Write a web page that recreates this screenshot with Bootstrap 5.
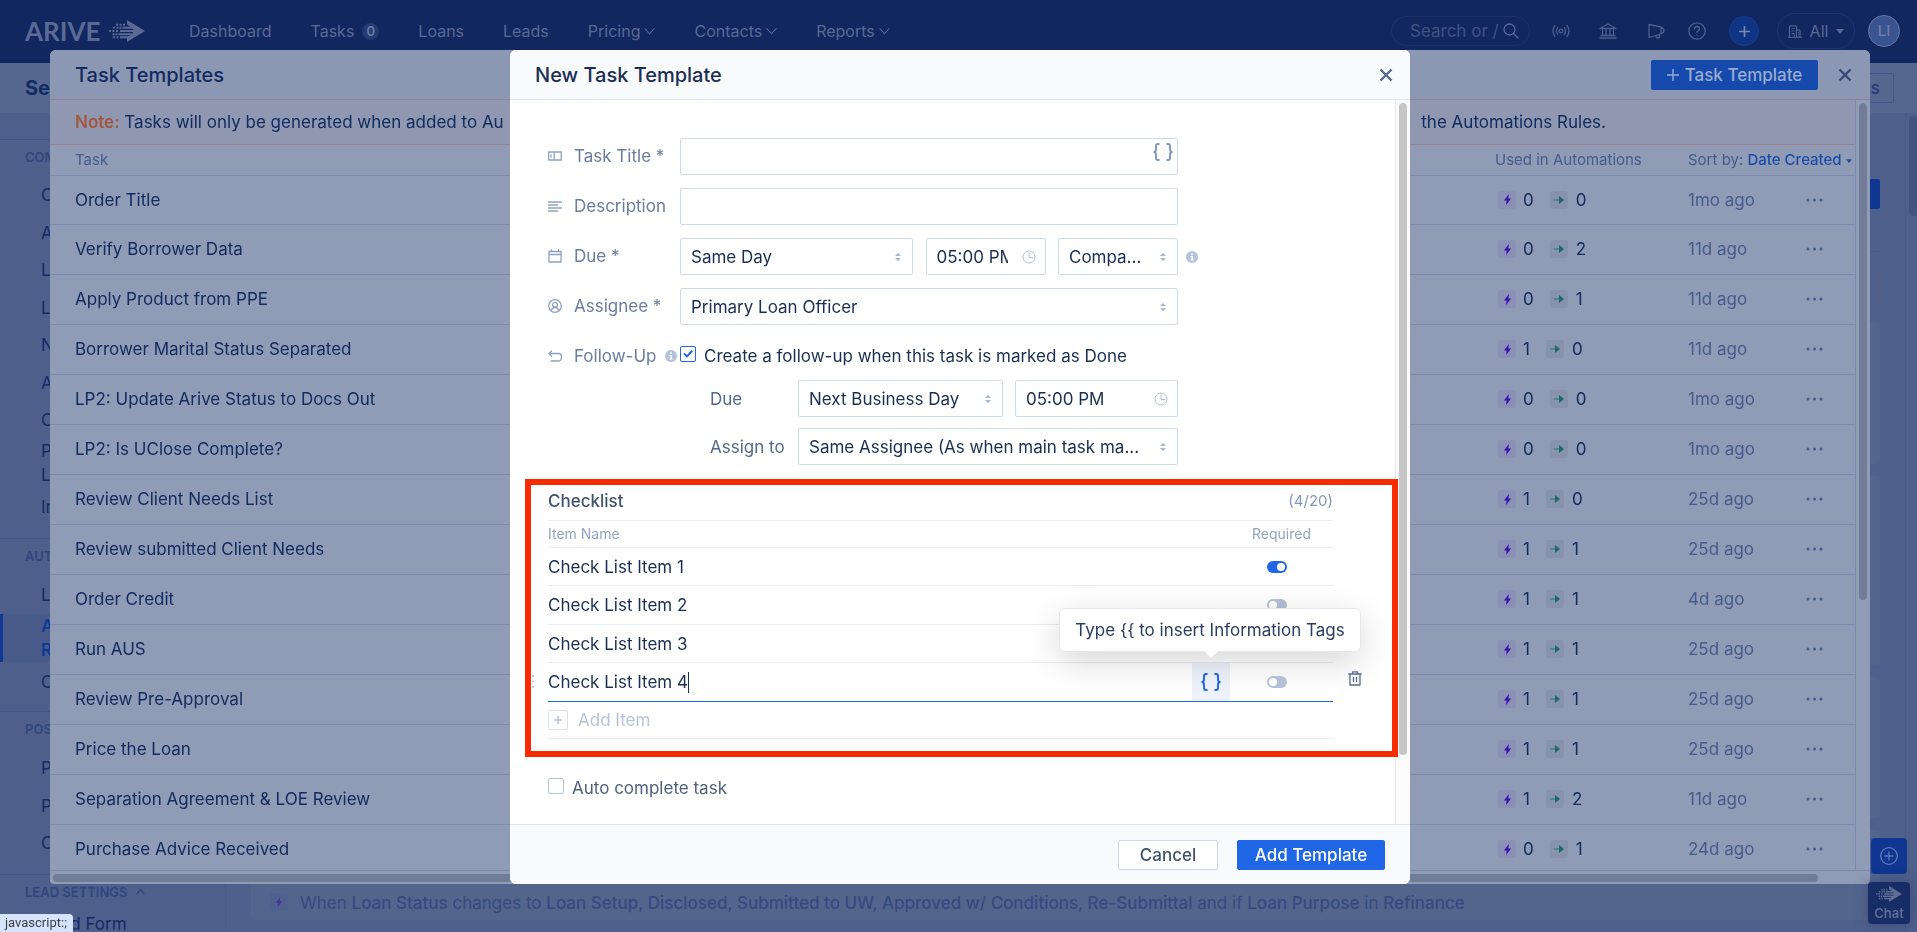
<!DOCTYPE html>
<html lang="en">
<head>
<meta charset="utf-8">
<meta name="viewport" content="width=device-width, initial-scale=1">
<title>ARIVE - Task Templates</title>
<link href="https://cdn.jsdelivr.net/npm/bootstrap@5.3.0/dist/css/bootstrap.min.css" rel="stylesheet">
<style>
:root{--fs:17px;--fs-sm:15px;--fs-xs:14px;--fs-lg:20px}
body{font-family:Inter,"Liberation Sans",sans-serif;font-size:var(--fs);line-height:24px;color:#122b60;background:#4f608c;height:100vh;overflow:hidden;display:flex;flex-direction:column}
button,input,select{font-family:inherit}
a{color:inherit;text-decoration:none}
svg{display:block;flex:none}
.ico{fill:none;stroke:currentColor;stroke-width:1.3;stroke-linecap:round;stroke-linejoin:round}

/* top bar */
.topbar{height:63px;background:#12265f;color:#5a6a94;font-size:16px;padding:0 17px 1px 25px;flex:none}
.brand{font-family:Lato,sans-serif;font-size:26px;font-weight:700;line-height:1;width:120px}
.mainnav{gap:39px;margin-left:44px}
.count{background:#243a72;border-radius:12px;font-size:13px;font-weight:600;width:17px;height:17px;line-height:17px;text-align:center;margin-left:8px;color:#6a7aa2}
.search{width:139px;height:30px;border:1px solid #1c3069;border-radius:15px;padding:0 11px 0 18px}
.search input{background:none;border:0;color:#5a6a94;width:93px;padding:0;font-size:17px;outline:0}
.search input::placeholder{color:#42527f;opacity:1}
.ticon{border:0;background:none;padding:0;color:#4c5d8a}
.addbtn{width:30px;height:30px;border-radius:50%;background:#0f3484;border:1px solid #143f94;color:#7387b4}
.allbtn{width:78px;height:36px;border-radius:18px;border:1px solid #1f3370;background:none;color:#5a6a94;padding:0}
.avatar{width:32px;height:32px;border-radius:50%;background:#3a5391;border:1px solid #6476a3;color:#6b7dab;font-size:15px;line-height:30px;text-align:center;font-weight:500}

/* page behind the dialogs */
.pagebar{height:50px;background:#55678f;flex:none;padding:0 23px 0 25px}
.pagebar h1{font-size:20px;font-weight:700;margin:0;color:#122c68}
.tagbtn{height:30px;border:1px solid #43558a;border-radius:2px;background:none;color:#23397a;font-size:var(--fs);font-weight:500;padding:0 13px}
.side{width:226px;border-right:1px solid #4a5b88;background:#4e5f8b;flex:none;color:#122c68;white-space:nowrap}
.side h2{font-size:13px;font-weight:600;color:#31467f;margin:0;line-height:16px;padding-left:25px}
.side section{border-top:1px solid #43558a;padding-top:9px}
.side a{display:block;padding:6px 0 7px 41px;width:200px}
.side a:nth-of-type(even){padding-top:7px}
.side a.active{border-left:3px solid #0f3a94;padding:0 0 0 38px;background:#475a8a;color:#0f3a94;font-weight:600}
.main{padding:0 25px}
.ghost{background:#53658d;border-radius:4px;margin-bottom:12px}
.prim{background:#0f3690;width:90px;height:30px;border:0;border-radius:2px}
.field-back{height:39px;border:1px solid #5a5d80;border-radius:3px;margin:19px 0 12px}
.rule{color:#364a7f;font-size:17px;padding:6px 19px;white-space:nowrap;gap:12px}
.rule b{font-weight:500}
.vthumb{background:#43557f;border-radius:4px;width:8px}
.gutter{width:15px;flex:none;padding:3px 0 0 3px}

/* list dialog */
.dlg{top:50px;bottom:48px;border-radius:6px 6px 4px 4px;overflow:hidden;display:flex;flex-direction:column}
.dlg-list{left:50px;right:47px;background:#909bb6}
.dlg-head{height:50px;flex:none;padding:0 25px;border-bottom:1px solid}
.dlg-head h2{font-size:var(--fs-lg);font-weight:500;margin:0;line-height:26px}
.dlg-list .dlg-head{border-color:#957f92;background:#8c97b4;padding-right:18px}
.note{height:45px;border-bottom:1px solid #997f8f;background:#9098b1;padding:0 249px 0 25px}
.note b{color:#a45640;font-weight:600}
.newbtn{background:#1549ac;color:#9aabd0;border:0;border-radius:2px;width:167px;height:30px;padding:0;font-weight:500;font-size:var(--fs)}
.tasks{width:100%;table-layout:fixed;border-collapse:collapse}
.tasks td,.tasks th{padding:0;border-bottom:1px solid #7d8aad;height:50px}
.tasks th{height:30px;font-weight:400;font-size:var(--fs-sm);color:#465b8d}
.tasks tbody tr:first-child td{height:49px}
.tasks td:first-child,.tasks th:first-child{padding-left:25px}
.tasks .ago{color:#465b8d}
.chip{width:18px;height:18px;border-radius:3px;background:#8b91b6;display:inline-flex;align-items:center;justify-content:center;flex:none}
.chip.go{background:#8793ad}
.dots{border:0;background:none;padding:0;color:#465b8d;display:block}
.hbar{height:14px;flex:none;padding:3px 52px 0 3px;border-top:1px solid #7d8aad}
.hbar div{height:8px;border-radius:4px;background:#717d97}

/* form dialog */
.dlg-form{left:0;right:-3px;margin:auto;width:900px;background:#fff;color:#1a2e52;border-radius:6px}
.dlg-form .dlg-head{background:#f9fafc;border-color:#dfe5ec;padding-right:17px}
.xbtn{border:0;background:none;padding:0;width:14px;color:#566a90}
.form-area{padding:38px 0 0 38px;flex:1}
.frow{display:grid;grid-template-columns:132px 498px 20px;margin-bottom:13px}
.lab{color:#6b7c9e;gap:12px;height:36px;white-space:nowrap}
.lab svg{color:#8fa1c2}
.box,.sel{height:37px;border:1px solid #cfd9ea;border-radius:2px;background:#fff;color:#1a2e52;font-size:var(--fs);padding:0 10px;width:100%;line-height:24px}
.sel{appearance:none;padding-right:24px;background:#fff url("data:image/svg+xml,%3Csvg xmlns='http://www.w3.org/2000/svg' width='8' height='10' viewBox='0 0 8 10'%3E%3Cpath d='M1 4 4 .8 7 4zM1 6l3 3.2L7 6z' fill='%23a9b8d2'/%3E%3C/svg%3E") no-repeat right 10px center}
.timebox{padding:0 9px 0 10px}
.timebox input{border:0;padding:0;min-width:0;flex:1;color:#1a2e52;background:none;font-size:var(--fs);outline:0}
.timebox svg{color:#b0bed8;margin-left:14px}
.tick{appearance:none;width:16px;height:16px;border:1px solid #b4c2dc;border-radius:2px;margin:0 0 4px;flex:none}
.tick:checked{border-color:#1f67e6;background:url("data:image/svg+xml,%3Csvg xmlns='http://www.w3.org/2000/svg' width='14' height='14' viewBox='0 0 14 14'%3E%3Cpath d='M3 6.6 6 9.4 11.2 3.8' fill='none' stroke='%231f67e6' stroke-width='2'/%3E%3C/svg%3E") center}
.info{width:12px;height:12px}
.sublab{color:#56688b;width:88px;flex:none}
.checklist{border:6px solid #f92b02;margin:14px -3px 0 -23px;position:relative;z-index:2;padding:0 59px 12px 17px}
.checklist .line{border-bottom:1px solid #e9edf3}
.cl-row{height:38px}
.cl-row:nth-child(even){height:39px}
.cl-row input[type=text]{border:0;padding:0;font-size:var(--fs);color:#1a2e52;flex:1;background:none;outline:0}
.cl-row.on{border-bottom:1px solid #1f67e6!important}
.small-head{font-size:var(--fs-xs);color:#93a3c0;height:27px;padding-right:22px}
.tog{appearance:none;width:20px;height:12px;border-radius:6px;background:#b4c0d5;margin:0 46px 0 0;flex:none;position:relative}
.tog::after{content:"";position:absolute;width:8px;height:8px;border-radius:50%;background:#fff;left:2px;top:2px}
.tog:checked{background:#1f67e6}
.tog:checked::after{left:10px}
.brace{width:38px;height:38px;border:0;padding:0;background:#edf2fc;color:#1f67e6;margin-right:37px;display:flex;align-items:center;justify-content:center}
.tip{position:absolute;bottom:49px;right:-131px;width:302px;height:44px;background:#fff;border:1px solid #e6e8ec;border-radius:6px;color:#2a3d60;font-size:var(--fs);line-height:42px;text-align:center;white-space:nowrap;box-shadow:0 10px 34px rgba(0,0,0,.16)}
.tip::after{content:"";position:absolute;left:143px;bottom:-7px;border:8px solid transparent;border-top-color:#fff;border-bottom:0}
.caret{width:1px;height:21px;background:#1a2e52}
.del{position:absolute;right:-29px;top:8px;border:0;background:none;padding:0;color:#566a90}
.grip{position:absolute;left:-18px;top:12px;color:#c3ccda}
.additem{border:0;background:none;padding:0;color:#b7c4dc;font-size:var(--fs);height:37px;width:100%;text-align:left}
.plusbox{width:20px;height:20px;border:1px solid #d9e0ec;border-radius:2px;display:flex;align-items:center;justify-content:center}
.fgutter{border-left:1px solid #e6e8ec;background:#fbfbfb}
.dlg-foot{height:60px;flex:none;background:#f9fafc;border-top:1px solid #dfe5ec;padding:0 25px;gap:19px}
.fbtn{height:30px;border-radius:2px;border:1px solid #cfd9ea;background:#fff;color:#42536f;font-size:var(--fs);font-weight:500;width:100px;padding:0}
.fbtn.go{background:#1f67e6;border-color:#1f67e6;color:#fff;width:148px}

/* floating pieces */
.float-tools{right:7px;bottom:8px;width:42px}
.fplus{width:36px;height:36px;border:0;border-radius:4px;background:#0f3690;color:#5f79b4;margin-bottom:8px}
.chat{width:42px;height:42px;border:0;border-radius:4px;background:#182c66;color:#5e6d96;font-size:13px;font-weight:600;line-height:14px;padding:0;box-shadow:0 0 14px rgba(30,45,100,.4)}
.status{left:0;bottom:0;height:18px;width:73px;background:#d5e3fc;color:#3c4043;font-size:13px;line-height:18px;padding-left:5px;border-top-right-radius:4px;font-family:Roboto,sans-serif}
</style>
</head>
<body>
<svg width="0" height="0" class="position-absolute">
  <symbol id="arrow-logo" viewBox="0 0 36 22"><path d="M18 0 36 11 18 22V17.500l3.500-2.300H9.500v-2H24V12H11v-2h13V8.800H13.500v-2h8L18 4.500z" fill="currentColor"/><g fill="currentColor"><path d="M7 3.700h2v2H7zM10.500 3.700h2v2h-2zM14 3.700h2v2h-2zM4 6.800h2v2H4zM7.500 6.800h2v2h-2zM10.500 6.800h2v2h-2zM0 10h2v2H0zM3.500 10h2v2h-2zM7 10h2v2H7zM3.500 13.200h2v2h-2zM6.500 13.200h2v2h-2zM4 16.300h2v2H4zM7.500 16.300h2v2h-2zM11 16.300h9v2h-9z"/></g></symbol>
  <symbol id="chev" viewBox="0 0 10 7"><path d="M0.500 1 5 6 9.500 1" fill="none" stroke="currentColor" stroke-width="1"/></symbol>
  <symbol id="bolt" viewBox="0 0 10 12"><path d="M6.500 0 1 7h3L3.500 12 9 5H6z" fill="#3a17a8"/></symbol>
  <symbol id="arr" viewBox="0 0 12 10"><path d="M1 5h6" stroke="#3f8787" stroke-width="1.600"/><path d="M6 1l5 4-5 4z" fill="#1b6a66"/></symbol>
  <symbol id="x" viewBox="0 0 14 14"><path d="M1.500 1.500 12.500 12.500M12.500 1.500 1.500 12.500" stroke="currentColor" stroke-width="2.400" fill="none"/></symbol>
  <symbol id="clock" viewBox="0 0 14 14"><circle cx="7" cy="7" r="6" fill="none" stroke="currentColor"/><path d="M7 2.500V7.500h4" fill="none" stroke="currentColor"/></symbol>
  <symbol id="braces" viewBox="0 0 22 18"><path d="M7.500 1H6Q4 1 4 3v3.500Q4 9 1.500 9 4 9 4 11.500V15q0 2 2 2h1.500M14.500 1H16q2 0 2 2v3.500Q18 9 20.500 9 18 9 18 11.500V15q0 2-2 2h-1.500" fill="none" stroke="currentColor" stroke-width="1.900"/></symbol>
  <symbol id="info" viewBox="0 0 12 12"><circle cx="6" cy="6" r="6" fill="#b4c2dc"/><path d="M5.200 2.200h1.700v1.600H5.200zM4.500 5h2.400v3.500h.8v1H4.500v-1h.9V6h-.9z" fill="#fff"/></symbol>
</svg>

<header class="topbar d-flex align-items-center">
  <a href="#" class="brand d-flex align-items-center justify-content-between">ARIVE <svg width="36" height="22"><use href="#arrow-logo"/></svg></a>
  <nav class="mainnav d-flex align-items-center">
    <a href="#">Dashboard</a>
    <a href="#" class="d-flex align-items-center">Tasks<span class="count">0</span></a>
    <a href="#">Loans</a>
    <a href="#">Leads</a>
    <a href="#" class="d-flex align-items-center gap-1">Pricing <svg width="11" height="8"><use href="#chev"/></svg></a>
    <a href="#" class="d-flex align-items-center gap-1">Contacts <svg width="11" height="8"><use href="#chev"/></svg></a>
    <a href="#" class="d-flex align-items-center gap-1">Reports <svg width="11" height="8"><use href="#chev"/></svg></a>
  </nav>
  <div class="ms-auto d-flex align-items-center">
    <label class="search d-flex align-items-center justify-content-between"><input type="text" placeholder="Search or /" aria-label="Search">
      <svg class="ico" width="16" height="16" viewBox="0 0 16 16" stroke="#5a6a94"><circle cx="6.500" cy="6.500" r="5.500"/><path d="M10.500 10.500 15 15"/></svg></label>
    <button class="ticon" style="margin-left:22px" aria-label="Live"><svg class="ico" width="18" height="14" viewBox="0 0 18 14"><circle cx="9" cy="7" r="1.800"/><path d="M5.700 3.500q-2.400 3.500 0 7M12.300 3.500q2.400 3.500 0 7M3 1.500q-4 5.500 0 11M15 1.500q4 5.500 0 11"/></svg></button>
    <button class="ticon" style="margin-left:29px" aria-label="Bank"><svg class="ico" width="18" height="16" viewBox="0 0 18 16"><path d="M1 5.500 9 1l8 4.500zM3.500 6v6.500M7 6v6.500M11 6v6.500M14.500 6v6.500M2 12.500h14M1 15h16"/></svg></button>
    <button class="ticon" style="margin-left:31px" aria-label="Announcements"><svg class="ico" width="17" height="16" viewBox="0 0 17 16"><path d="M1 1.500 13 4v7L1 14.500zM13 4.500q3 .5 3 3t-3 3M8 12.500v1.500q2 2 3.500 0v-2.500"/></svg></button>
    <button class="ticon" style="margin-left:23px" aria-label="Help"><svg class="ico" width="18" height="18" viewBox="0 0 18 18"><circle cx="9" cy="9" r="8.200"/><path d="M6.500 7q0-2.500 2.500-2.500T11.500 7Q11.500 8.500 9 9.500v1M9 13v.3"/></svg></button>
    <button class="addbtn d-flex align-items-center justify-content-center p-0" style="margin-left:23px" aria-label="Add"><svg width="11" height="11" viewBox="0 0 11 11"><path d="M5.500 0v11M0 5.500h11" stroke="currentColor" stroke-width="1.700"/></svg></button>
    <button class="allbtn d-flex align-items-center justify-content-center gap-2" style="margin-left:18px"><svg class="ico" width="14" height="13" viewBox="0 0 14 13"><path d="M1.500 12V1h7v11M8.500 5h3.500v7M0.500 12.300h13M4 3.500h.3M6 3.500h.3M4 6h.3M6 6h.3M4 8.500h2.300V12M10.500 7.500v.3M10.500 9.800v.3" stroke-width="1"/></svg>All<svg width="8" height="5" viewBox="0 0 8 5"><path d="M0 0h8L4 5z" fill="currentColor"/></svg></button>
    <div class="avatar" style="margin-left:13px">LI</div>
  </div>
</header>

<div class="pagebar d-flex align-items-center justify-content-between"><h1>Se</h1><button class="tagbtn">Tags</button></div>

<div class="d-flex flex-grow-1 overflow-hidden">
  <aside class="side">
    <div style="height:26px"></div>
    <section style="height:399px"><h2 style="margin-bottom:12px">COM</h2>
      <a href="#">C</a><a href="#">A</a><a href="#">L</a><a href="#">L</a><a href="#">N</a><a href="#">A</a><a href="#">C</a><a href="#" class="pt-0 pb-1">P<br>L</a><a href="#" class="pt-1">Ir</a>
    </section>
    <section style="height:173px"><h2 class="mb-2">AUT</h2>
      <a href="#" style="padding-top:11px">L</a><a href="#" class="active">A<br>R</a><a href="#" class="pt-2">C</a>
    </section>
    <section style="height:163px"><h2 style="margin-bottom:13px">POS</h2>
      <a href="#">P</a><a href="#">P</a><a href="#">C</a>
    </section>
    <section><h2 class="d-flex align-items-center gap-2">LEAD SETTINGS <svg width="9" height="6" viewBox="0 0 10 7"><path d="M.5 6 5 1l4.500 5" fill="none" stroke="currentColor" stroke-width="1.500"/></svg></h2>
      <a href="#" class="pt-2 mt-1">Lead Form</a>
    </section>
  </aside>
  <main class="main flex-grow-1 overflow-hidden">
    <div class="d-flex justify-content-end align-items-center border-bottom" style="height:139px;padding-top:24px;border-color:#4a5b88!important"><button class="prim" aria-label="New rule"></button></div>
    <div class="field-back"></div>
    <div class="ghost" style="height:142px"></div>
    <div class="ghost" style="height:189px"></div>
    <div class="ghost" style="height:141px"></div>
    <div class="ghost rule d-flex align-items-end" style="height:90px;padding-bottom:5px"><span class="chip mb-1" style="background:#50608f"><svg width="8" height="10" opacity=".6"><use href="#bolt"/></svg></span><span>When <b>Loan Status</b> changes to <b>Loan Setup, Disclosed, Submitted to UW, Approved w/ Conditions, Re-Submittal</b> and if <b>Loan Purpose</b> in <b>Refinance</b></span></div>
  </main>
  <div class="gutter" style="width:12px;border-left:1px solid #4a5b88"><div class="vthumb" style="height:100px"></div></div>
</div>

<section class="dlg dlg-list position-fixed" role="dialog" aria-label="Task Templates">
  <div class="dlg-head d-flex align-items-center">
    <h2 class="me-auto">Task Templates</h2>
    <button class="newbtn d-flex align-items-center justify-content-center gap-1"><svg width="14" height="12" viewBox="0 0 14 12"><path d="M6 0v12M0 6h12" stroke="currentColor" stroke-width="1.400"/></svg>Task Template</button>
    <button class="xbtn" style="margin-left:20px;color:#354a7c" aria-label="Close"><svg width="14" height="14"><use href="#x"/></svg></button>
  </div>
  <div class="d-flex flex-grow-1 overflow-hidden">
    <div class="flex-grow-1 overflow-hidden" style="border-right:1px solid #7d8aad">
      <div class="note d-flex align-items-center justify-content-between"><span><b>Note:</b> Tasks will only be generated when added to Au</span><span>the Automations Rules.</span></div>
      <table class="tasks">
        <colgroup><col><col style="width:359px"><col style="width:118px"><col style="width:49px"></colgroup>
        <thead><tr><th>Task</th><th style="padding-left:166px">Used in Automations</th><th colspan="2" class="text-nowrap">Sort by: <a href="#" style="color:#1a4cac;font-weight:500">Date Created <svg class="d-inline-block align-middle" width="6" height="4" viewBox="0 0 8 5"><path d="M0 0h8L4 5z" fill="currentColor"/></svg></a></th></tr></thead>
        <tbody id="rows"></tbody>
      </table>
    </div>
    <div class="gutter" style="width:14px"><div class="vthumb" style="height:497px;background:#717d97"></div></div>
  </div>
  <div class="hbar"><div></div></div>
</section>

<section class="dlg dlg-form position-fixed" role="dialog" aria-label="New Task Template">
  <div class="dlg-head d-flex align-items-center justify-content-between"><h2>New Task Template</h2><button class="xbtn" aria-label="Close"><svg width="14" height="14"><use href="#x"/></svg></button></div>
  <div class="d-flex flex-grow-1">
    <form class="form-area" onsubmit="return false">
      <div class="frow"><label for="title" class="lab d-flex align-items-center"><svg class="ico" width="14" height="10" viewBox="0 0 14 10"><path d="M5 1H.7v8H5M7.500 1h5.800v8H7.500M6.200 0v10M3 4v2"/></svg>Task Title *</label>
        <div class="position-relative"><input id="title" class="box" type="text"><svg class="position-absolute" style="right:4px;top:5px;color:#8096bd" width="22" height="18"><use href="#braces"/></svg></div></div>
      <div class="frow"><label for="desc" class="lab d-flex align-items-center"><svg class="ico" width="14" height="11" viewBox="0 0 14 11"><path d="M.5 1h13M.5 4h9M.5 7h13M.5 10h9"/></svg>Description</label><input id="desc" class="box" type="text"></div>
      <div class="frow"><label for="due" class="lab d-flex align-items-center"><svg class="ico" width="14" height="14" viewBox="0 0 14 14"><path d="M1 2.500h12V13H1zM1 5.500h12M3.500.7v2M10.500.7v2"/></svg>Due *</label>
        <div class="d-flex justify-content-between">
          <select id="due" class="sel" style="width:233px"><option>Same Day</option></select>
          <div class="box timebox d-flex align-items-center" style="width:120px"><input type="text" value="05:00 PM" aria-label="Time"><svg width="14" height="14"><use href="#clock"/></svg></div>
          <select class="sel" style="width:120px" aria-label="Hours"><option>Compa...</option></select>
        </div>
        <svg class="info align-self-center ms-2"><use href="#info"/></svg></div>
      <div class="frow"><label for="asg" class="lab d-flex align-items-center"><svg class="ico" width="14" height="14" viewBox="0 0 14 14"><circle cx="7" cy="7" r="6.300"/><circle cx="7" cy="5.800" r="2.400"/><path d="M3.300 11.500q.7-3 3.700-3t3.700 3"/></svg>Assignee *</label><select id="asg" class="sel"><option>Primary Loan Officer</option></select></div>
      <div class="frow mb-0"><div class="lab d-flex align-items-center"><svg class="ico" width="14" height="12" viewBox="0 0 14 12"><path d="M3.500 1 1 3.500 3.500 6M1 3.500h9.500q3 0 3 3.700t-3 3.800H3"/></svg>Follow-Up<svg class="info" style="margin-left:-3px"><use href="#info"/></svg></div>
        <label class="d-flex align-items-center gap-2"><input type="checkbox" class="tick" checked>Create a follow-up when this task is marked as Done</label></div>
      <div class="d-flex align-items-center" style="margin:6px 0 11px 162px;width:468px"><label for="fdue" class="sublab">Due</label><select id="fdue" class="sel" style="width:205px"><option>Next Business Day</option></select>
        <div class="box timebox d-flex align-items-center ms-auto" style="width:163px"><input type="text" value="05:00 PM" aria-label="Follow-up time"><svg width="14" height="14"><use href="#clock"/></svg></div></div>
      <div class="d-flex align-items-center" style="margin-left:162px;width:468px"><label for="fas" class="sublab">Assign to</label><select id="fas" class="sel"><option>Same Assignee (As when main task ma...</option></select></div>

      <div class="checklist">
        <div class="line d-flex justify-content-between align-items-center" style="height:36px;padding-bottom:3px;color:#42536f"><span style="font-weight:500">Checklist</span><span style="font-size:15px;color:#8597b8">(4/20)</span></div>
        <div class="line small-head d-flex justify-content-between align-items-center"><span>Item Name</span><span>Required</span></div>
        <div class="line cl-row d-flex align-items-center"><input type="text" value="Check List Item 1" aria-label="Item 1"><input type="checkbox" class="tog" checked aria-label="Required 1"></div>
        <div class="line cl-row d-flex align-items-center"><input type="text" value="Check List Item 2" aria-label="Item 2"><input type="checkbox" class="tog" aria-label="Required 2"></div>
        <div class="line cl-row d-flex align-items-center"><input type="text" value="Check List Item 3" aria-label="Item 3"><input type="checkbox" class="tog" aria-label="Required 3"></div>
        <div class="line cl-row on d-flex align-items-center position-relative">
          <svg class="grip" width="6" height="13" viewBox="0 0 6 13"><path d="M2 1h2M2 6.500h2M2 12h2" stroke="currentColor" stroke-width="2"/></svg>
          <span>Check List Item 4</span><span class="caret me-auto"></span>
          <button class="brace position-relative" aria-label="Insert tag"><svg width="22" height="18"><use href="#braces"/></svg><span class="tip">Type {{ to insert Information Tags</span></button>
          <input type="checkbox" class="tog" aria-label="Required 4">
          <button class="del" aria-label="Delete"><svg class="ico" width="14" height="15" viewBox="0 0 14 15"><path d="M.7 3h12.600M2 3v11h10V3M4.500 3V.8h5V3M5.500 6.500v4M8.500 6.500v4"/></svg></button>
        </div>
        <button class="additem line d-flex align-items-center"><span class="plusbox"><svg width="8" height="8" viewBox="0 0 8 8"><path d="M4 0v8M0 4h8" stroke="currentColor" stroke-width="1.400"/></svg></span><span style="margin-left:10px">Add Item</span></button>
      </div>
      <label class="d-flex align-items-center gap-2" style="color:#4f607f;margin-top:19px"><input type="checkbox" class="tick">Auto complete task</label>
    </form>
    <div class="gutter fgutter"><div class="vthumb" style="height:652px;background:#c6c6c6"></div></div>
  </div>
  <div class="dlg-foot d-flex align-items-center justify-content-end"><button class="fbtn">Cancel</button><button class="fbtn go">Add Template</button></div>
</section>

<div class="float-tools position-fixed">
  <button class="fplus d-flex align-items-center justify-content-center mx-auto" aria-label="New"><svg class="ico" width="18" height="18" viewBox="0 0 18 18"><circle cx="9" cy="9" r="8.300"/><path d="M9 5v8M5 9h8"/></svg></button>
  <button class="chat d-flex flex-column align-items-center justify-content-center gap-1"><svg width="26" height="16"><use href="#arrow-logo"/></svg>Chat</button>
</div>
<div class="status position-fixed">javascript:;</div>

<script>
const tasks = [
  ["Order Title",0,0,"1mo"],["Verify Borrower Data",0,2,"11d"],["Apply Product from PPE",0,1,"11d"],
  ["Borrower Marital Status Separated",1,0,"11d"],["LP2: Update Arive Status to Docs Out",0,0,"1mo"],
  ["LP2: Is UClose Complete?",0,0,"1mo"],["Review Client Needs List",1,0,"25d"],["Review submitted Client Needs",1,1,"25d"],
  ["Order Credit",1,1,"4d"],["Run AUS",1,1,"25d"],["Review Pre-Approval",1,1,"25d"],["Price the Loan",1,1,"25d"],
  ["Separation Agreement &amp; LOE Review",1,2,"11d"],["Purchase Advice Received",0,1,"24d"]
];
document.getElementById("rows").innerHTML = tasks.map(([name, a, b, age]) => `<tr>
  <td>${name}</td>
  <td style="padding-left:169px"><div class="d-flex align-items-center"><span class="chip"><svg width="9" height="11"><use href="#bolt"/></svg></span><span style="margin:0 16px 0 7px">${a}</span><span class="chip go"><svg width="12" height="10"><use href="#arr"/></svg></span><span style="margin-left:8px">${b}</span></div></td>
  <td class="ago">${age} ago</td>
  <td><button class="dots" aria-label="More"><svg width="17" height="4" viewBox="0 0 17 4" fill="currentColor"><circle cx="2" cy="2" r="1.500"/><circle cx="8.500" cy="2" r="1.500"/><circle cx="15" cy="2" r="1.500"/></svg></button></td></tr>`).join("");
</script>
<script src="https://cdn.jsdelivr.net/npm/bootstrap@5.3.0/dist/js/bootstrap.bundle.min.js"></script>
</body>
</html>
